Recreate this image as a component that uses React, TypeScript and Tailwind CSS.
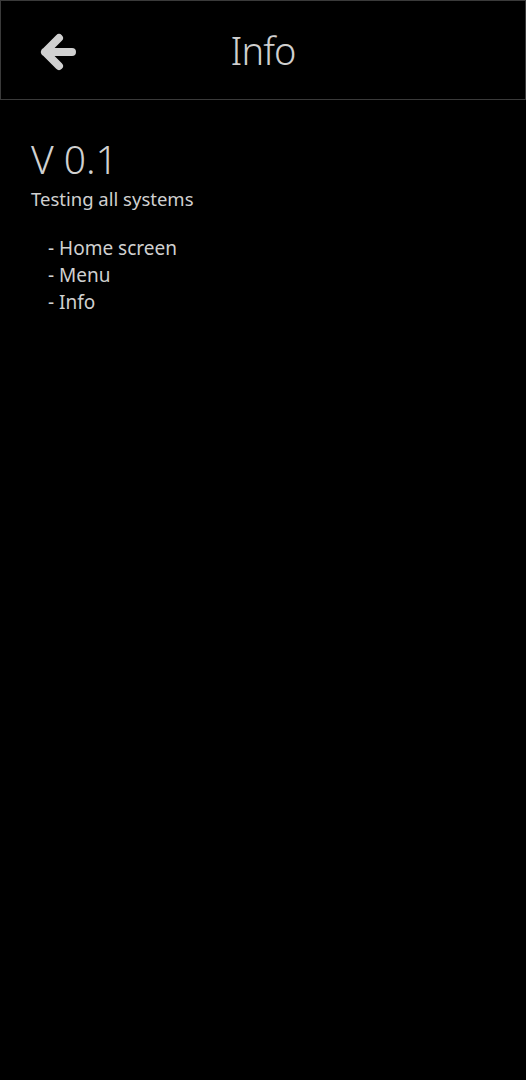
export default function App() {
  return (
    <div className="min-h-screen w-[526px] bg-black text-[#d0d0d0] font-['Noto_Sans',sans-serif]">
      <header className="relative flex h-[100px] items-center justify-center border border-[#3a3a3a]">
        <button className="absolute left-[38px] top-[31px] h-[40px] w-[40px]">
          <svg viewBox="0 0 40 40" width="40" height="40">
            <path
              d="M20 6 L6 20 L20 34 M6 20 L33 20"
              fill="none"
              stroke="#d0d0d0"
              strokeWidth="8"
              strokeLinecap="round"
              strokeLinejoin="round"
            />
          </svg>
        </button>
        <h1 className="text-[38px] font-light leading-none tracking-tight text-[#cfcfcf]">Info</h1>
      </header>

      <main className="px-[31px] pt-[36px]">
        <h2 className="text-[39px] font-light leading-[46px] text-[#d0d0d0]">V 0.1</h2>
        <p className="mt-[4px] text-[18.5px] leading-[26px]">Testing all systems</p>
        <ul className="mt-[23px] pl-[17px] text-[19px] leading-[27px]">
          <li>- Home screen</li>
          <li>- Menu</li>
          <li>- Info</li>
        </ul>
      </main>
    </div>
  );
}
